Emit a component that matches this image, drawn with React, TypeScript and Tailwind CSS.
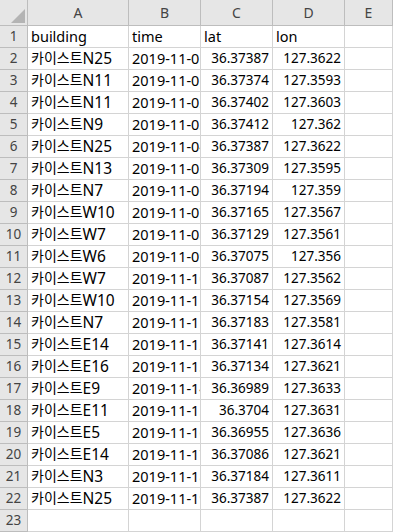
const rows: [string, string, string, string][] = [
  ['building', 'time', 'lat', 'lon'],
  ['카이스트N25', '2019-11-01 09:12', '36.37387', '127.3622'],
  ['카이스트N11', '2019-11-01 09:40', '36.37374', '127.3593'],
  ['카이스트N11', '2019-11-02 10:05', '36.37402', '127.3603'],
  ['카이스트N9', '2019-11-03 11:20', '36.37412', '127.362'],
  ['카이스트N25', '2019-11-04 13:02', '36.37387', '127.3622'],
  ['카이스트N13', '2019-11-05 14:18', '36.37309', '127.3595'],
  ['카이스트N7', '2019-11-06 15:33', '36.37194', '127.359'],
  ['카이스트W10', '2019-11-07 16:47', '36.37165', '127.3567'],
  ['카이스트W7', '2019-11-08 17:10', '36.37129', '127.3561'],
  ['카이스트W6', '2019-11-09 18:25', '36.37075', '127.356'],
  ['카이스트W7', '2019-11-10 09:05', '36.37087', '127.3562'],
  ['카이스트W10', '2019-11-11 10:30', '36.37154', '127.3569'],
  ['카이스트N7', '2019-11-11 11:42', '36.37183', '127.3581'],
  ['카이스트E14', '2019-11-12 12:55', '36.37141', '127.3614'],
  ['카이스트E16', '2019-11-13 13:16', '36.37134', '127.3621'],
  ['카이스트E9', '2019-11-14 14:08', '36.36989', '127.3633'],
  ['카이스트E11', '2019-11-15 15:27', '36.3704', '127.3631'],
  ['카이스트E5', '2019-11-16 16:39', '36.36955', '127.3636'],
  ['카이스트E14', '2019-11-17 17:51', '36.37086', '127.3621'],
  ['카이스트N3', '2019-11-18 18:03', '36.37184', '127.3611'],
  ['카이스트N25', '2019-11-19 19:14', '36.37387', '127.3622'],
];

const cols = ['A', 'B', 'C', 'D', 'E'];

export default function App() {
  const all = [...rows, null];
  return (
    <div
      className="w-[393px] h-[532px] overflow-hidden bg-white text-black"
      style={{ fontFamily: '"Noto Sans", "Noto Sans CJK KR", sans-serif' }}
    >
      <div className="grid grid-cols-[28px_101px_72px_72px_72px_1fr] auto-rows-[22px] [grid-template-rows:26px]">
        {/* corner */}
        <div className="relative bg-[#e6e6e6] border-r border-b border-[#bdbdbd]">
          <div className="absolute right-[2px] bottom-[2px] w-0 h-0 border-l-[14px] border-l-transparent border-b-[14px] border-b-[#b4b4b4]" />
        </div>
        {cols.map((c) => (
          <div
            key={c}
            className="flex items-center justify-center bg-[#e6e6e6] border-r border-b border-[#bdbdbd] text-[14px] text-[#444]"
          >
            {c}
          </div>
        ))}

        {all.map((r, i) => (
          <Row key={i} n={i + 1} r={r} />
        ))}
      </div>
    </div>
  );
}

// split "카이스트N25" into hangul + latin so each gets its own size
function Building({ v }: { v: string }) {
  const m = v.match(/^([\uac00-\ud7a3]+)(.*)$/);
  if (!m) return <>{v}</>;
  return (
    <>
      <span className="text-[14px]">{m[1]}</span>
      <span className="text-[15.5px]">{m[2]}</span>
    </>
  );
}

function Row({ n, r }: { n: number; r: [string, string, string, string] | null }) {
  const header = n === 1;
  const cell = 'flex items-end pb-[1px] px-[3px] border-r border-b border-[#d4d4d4] overflow-hidden whitespace-nowrap leading-[20px]';
  const txt = 'text-[14.5px]';
  const num = header ? 'text-[14.5px]' : 'justify-end text-[13.5px]';
  return (
    <>
      <div className="flex items-center justify-center bg-[#e6e6e6] border-r border-b border-[#bdbdbd] text-[13.5px] text-[#444]">
        {n}
      </div>
      {r ? (
        <>
          <div className={`${cell} ${txt}`}>
            <Building v={r[0]} />
          </div>
          <div className={`${cell} ${txt}`}>{r[1]}</div>
          <div className={`${cell} ${num}`}>{r[2]}</div>
          <div className={`${cell} ${num}`}>{r[3]}</div>
        </>
      ) : (
        <>
          <div className={cell} />
          <div className={cell} />
          <div className={cell} />
          <div className={cell} />
        </>
      )}
      <div className={cell} />
    </>
  );
}
